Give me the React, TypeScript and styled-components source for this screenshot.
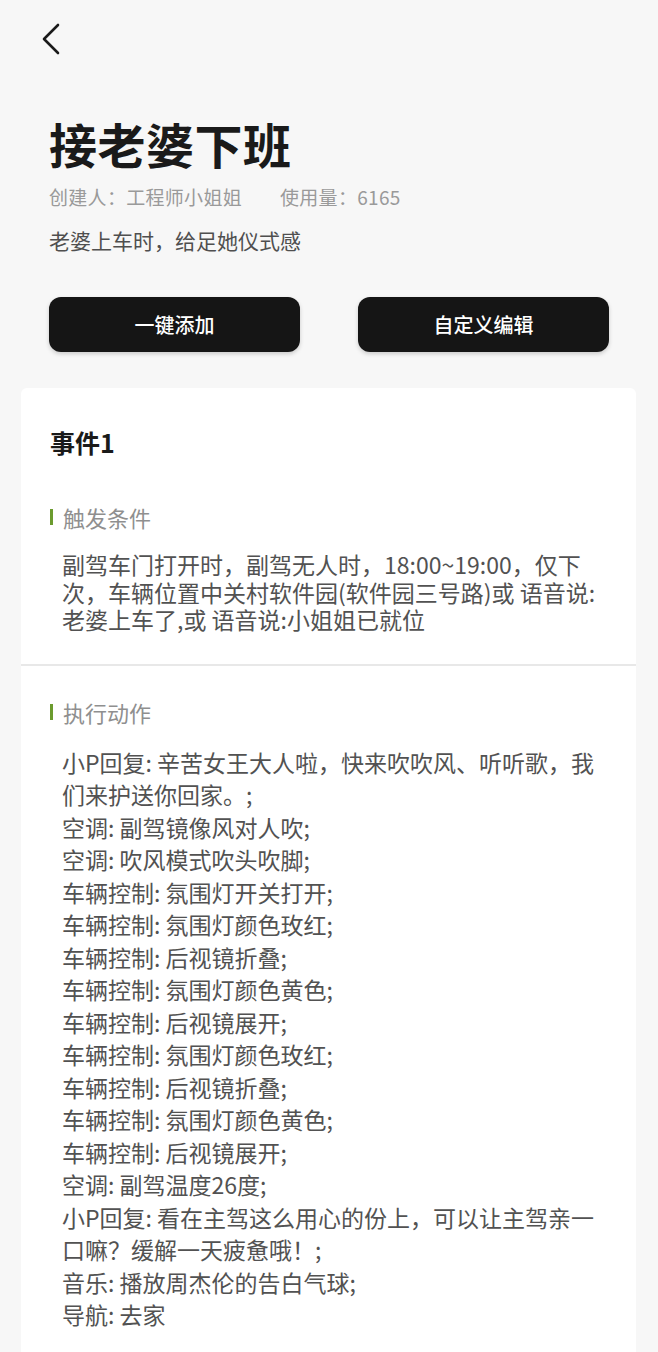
import React from "react"
import styled, { createGlobalStyle } from "styled-components"

const GlobalStyle = createGlobalStyle`
  html, body {
    margin: 0;
    padding: 0;
    background: #f7f7f7;
  }
  body {
    font-family: "Noto Sans CJK SC", "Noto Sans", sans-serif;
    -webkit-font-smoothing: antialiased;
  }
`

const Page = styled.div`
  width: 658px;
  min-height: 1352px;
  padding: 0 22px 0 21px;
  box-sizing: border-box;
  background: #f7f7f7;
`

const TopBar = styled.div`
  height: 78px;
  display: flex;
  align-items: center;
  padding-left: 20px;
`

const BackButton = styled.button`
  border: none;
  background: none;
  padding: 0;
  display: flex;
  cursor: pointer;
`

const Header = styled.div`
  padding: 0 27px 0 28px;
`

const Title = styled.h1`
  margin: 35px 0 0;
  font-size: 48px;
  line-height: 60px;
  font-weight: 700;
  color: #1a1a1a;
  letter-spacing: 0.5px;
`

const Meta = styled.div`
  margin-top: 11px;
  display: flex;
  gap: 38px;
  font-size: 19px;
  line-height: 26px;
  color: #9a9a9a;
  letter-spacing: 0.3px;
`

const Desc = styled.p`
  margin: 16px 0 0;
  font-size: 21px;
  line-height: 28px;
  color: #4f4f4f;
`

const Actions = styled.div`
  margin-top: 43px;
  display: grid;
  grid-template-columns: 251px 251px;
  justify-content: space-between;
`

const ActionButton = styled.button`
  height: 55px;
  border: none;
  border-radius: 12px;
  background: #151515;
  color: #fff;
  font-family: inherit;
  font-size: 20px;
  font-weight: 500;
  box-shadow: 0 2px 4px rgba(0, 0, 0, 0.18);
  cursor: pointer;
`

const Card = styled.div`
  margin-top: 36px;
  background: #fff;
  border-radius: 6px 6px 0 0;
`

const Section = styled.section<{ $top: number; $bottom: number; $divider?: boolean }>`
  padding: ${({ $top }) => $top}px 29px ${({ $bottom }) => $bottom}px;
  border-bottom: ${({ $divider }) => ($divider ? "2px solid #e8e8e8" : "none")};
`

const EventTitle = styled.h2`
  margin: 0 0 43px;
  font-size: 25px;
  line-height: 34px;
  font-weight: 700;
  color: #1a1a1a;
`

const Label = styled.div`
  display: flex;
  align-items: center;
  gap: 10px;
  font-size: 22px;
  line-height: 30px;
  color: #8f8f8f;

  &::before {
    content: "";
    width: 3px;
    height: 16px;
    background: #6b9b2e;
  }
`

const Body = styled.div<{ $lineHeight: number }>`
  margin-top: 19px;
  padding: 0 8px 0 12px;
  font-size: 23px;
  line-height: ${({ $lineHeight }) => $lineHeight}px;
  color: #525252;
`

const Line = styled.div``

const BackIcon = () => (
  <svg width="22" height="32" viewBox="0 0 22 32" fill="none">
    <path d="M17 2 L3 16 L17 30" stroke="#1a1a1a" strokeWidth="2.6" strokeLinecap="round" strokeLinejoin="round" />
  </svg>
)

const actions = [
  "小P回复: 辛苦女王大人啦，快来吹吹风、听听歌，我们来护送你回家。;",
  "空调: 副驾镜像风对人吹;",
  "空调: 吹风模式吹头吹脚;",
  "车辆控制: 氛围灯开关打开;",
  "车辆控制: 氛围灯颜色玫红;",
  "车辆控制: 后视镜折叠;",
  "车辆控制: 氛围灯颜色黄色;",
  "车辆控制: 后视镜展开;",
  "车辆控制: 氛围灯颜色玫红;",
  "车辆控制: 后视镜折叠;",
  "车辆控制: 氛围灯颜色黄色;",
  "车辆控制: 后视镜展开;",
  "空调: 副驾温度26度;",
  "小P回复: 看在主驾这么用心的份上，可以让主驾亲一口嘛？缓解一天疲惫哦！;",
  "音乐: 播放周杰伦的告白气球;",
  "导航: 去家",
]

export default function App() {
  return (
    <>
      <GlobalStyle />
      <Page>
        <TopBar>
          <BackButton aria-label="返回">
            <BackIcon />
          </BackButton>
        </TopBar>
        <Header>
          <Title>接老婆下班</Title>
          <Meta>
            <span>创建人：工程师小姐姐</span>
            <span>使用量：6165</span>
          </Meta>
          <Desc>老婆上车时，给足她仪式感</Desc>
          <Actions>
            <ActionButton>一键添加</ActionButton>
            <ActionButton>自定义编辑</ActionButton>
          </Actions>
        </Header>
        <Card>
          <Section $top={37} $bottom={30} $divider>
            <EventTitle>事件1</EventTitle>
            <Label>触发条件</Label>
            <Body $lineHeight={27.5}>
              副驾车门打开时，副驾无人时，18:00~19:00，仅下次，车辆位置中关村软件园(软件园三号路)或 语音说:老婆上车了,或 语音说:小姐姐已就位
            </Body>
          </Section>
          <Section $top={31} $bottom={30}>
            <Label>执行动作</Label>
            <Body $lineHeight={32.5}>
              {actions.map((a, i) => (
                <Line key={i}>{a}</Line>
              ))}
            </Body>
          </Section>
        </Card>
      </Page>
    </>
  )
}
